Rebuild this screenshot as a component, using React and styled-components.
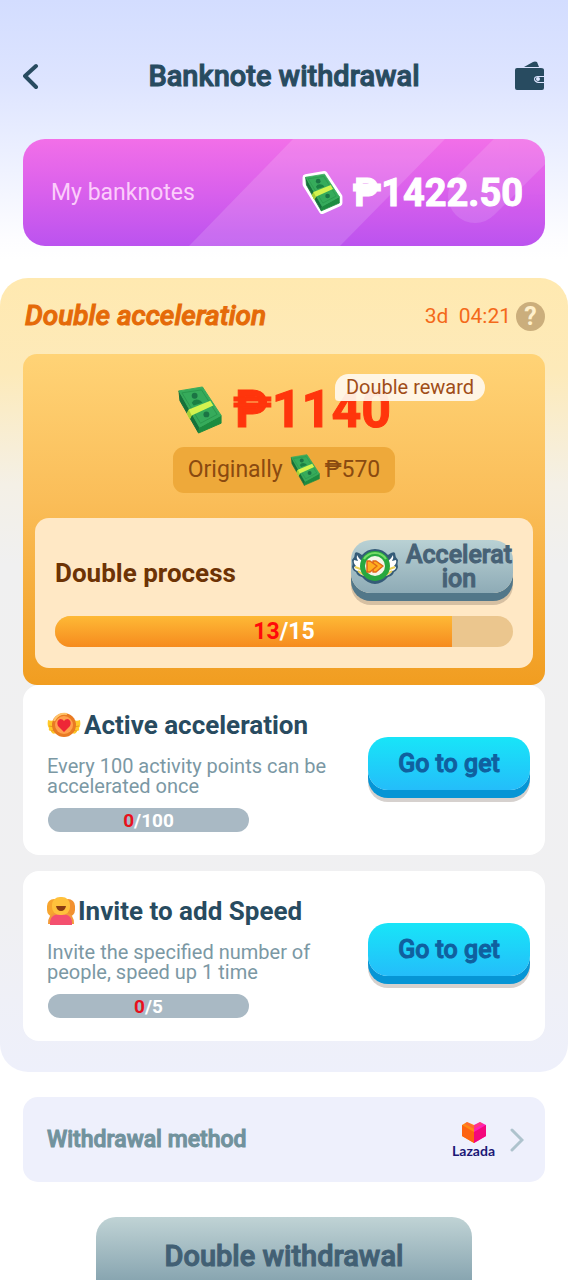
import * as React from "react"
import styled, { createGlobalStyle } from "styled-components"

const GlobalStyle = createGlobalStyle`
* {
  box-sizing: border-box;
}
body {
  margin: 0;
  font-family: Roboto, "Noto Sans", sans-serif;
  background: #fff;
}
h1, h2, h3, p {
  margin: 0;
}
button {
  font-family: inherit;
  border: 0;
  padding: 0;
  cursor: pointer;
}
svg {
  display: block;
  flex: none;
}
`

const Screen = styled.div`
height: 100vh;
overflow-y: auto;
scrollbar-width: none;
background: linear-gradient(180deg, #d3ddff 0px, #dde4ff 80px, #fdfdff 240px, #fff 260px);
`

const Header = styled.header`
display: flex;
align-items: center;
justify-content: space-between;
padding: 56px 23px 0;
height: 96px;
`

const Title = styled.h1`
font-size: 29px;
line-height: 40px;
font-weight: 500;
color: #284b60;
-webkit-text-stroke: 1px #284b60;
`

const IconButton = styled.button`
display: flex;
width: 30px;
background: none;
`

const Content = styled.div`
padding: 0 23px;
`

const BalanceCard = styled.section`
position: relative;
overflow: hidden;
display: flex;
align-items: center;
justify-content: space-between;
height: 107px;
margin: 43px 0 32px;
padding: 0 22px 0 28px;
border-radius: 22px;
background: linear-gradient(180deg, #f26fe8 0%, #d960ec 50%, #bb53ef 100%);
`

const Shine = styled.svg`
position: absolute;
inset: 0;
width: 100%;
height: 100%;
`

const BalanceLabel = styled.p`
position: relative;
font-size: 23px;
line-height: 28px;
color: #fccdfb;
`

const BalanceAmount = styled.p`
position: relative;
display: flex;
align-items: center;
gap: 9px;
font-size: 38px;
line-height: 48px;
font-weight: 700;
color: #fff;
-webkit-text-stroke: 1px #fff;
`

const Panel = styled.section`
padding: 0 23px 31px;
border-radius: 28px;
background: linear-gradient(180deg, #ffe9b0 0%, #fdeaba 12%, #f4f0e6 26%, #f0f0f0 36%, #f0f0f2 80%, #eef0fb 100%);
`

const PanelHead = styled.div`
display: flex;
align-items: center;
justify-content: space-between;
height: 76px;
padding-left: 2px;
`

const PanelTitle = styled.h2`
font-size: 28px;
line-height: 32px;
font-weight: 500;
font-style: italic;
color: #e56a08;
-webkit-text-stroke: 1px #e56a08;
`

const Timer = styled.div`
display: flex;
align-items: center;
gap: 5px;
font-size: 21px;
line-height: 28px;
color: #f4691a;
white-space: pre;
`

const Help = styled.button`
width: 29px;
height: 29px;
border-radius: 50%;
background: #cbae7c;
color: #fff0cb;
font-size: 25px;
line-height: 29px;
font-weight: 700;
`

const RewardCard = styled.div`
display: flex;
flex-direction: column;
align-items: center;
padding: 25px 12px 17px;
border-radius: 14px;
background: linear-gradient(180deg, #ffd376 0%, #fabd58 45%, #f19d20 100%);
`

const Reward = styled.div`
position: relative;
display: flex;
align-items: center;
gap: 8px;
height: 62px;
font-size: 52px;
line-height: 62px;
font-weight: 700;
color: #ff350c;
-webkit-text-stroke: 1px #ff350c;
`

const RewardTag = styled.span`
position: absolute;
left: 158px;
top: -5px;
padding: 0 11px;
border-radius: 14px 14px 14px 4px;
background: rgba(255, 248, 238, 0.92);
font-size: 20px;
line-height: 27px;
font-weight: 400;
white-space: nowrap;
color: #a04d18;
-webkit-text-stroke: 0;
`

const Original = styled.p`
display: flex;
align-items: center;
gap: 3px;
height: 46px;
margin-top: 6px;
padding: 0 15px;
border-radius: 11px;
background: #eea93a;
font-size: 23px;
line-height: 28px;
color: #8a4a10;
`

const OriginalLabel = styled.span`
margin-right: 4px;
`

const Process = styled.div`
align-self: stretch;
margin-top: 25px;
padding: 22px 20px 21px;
border-radius: 14px;
background: #ffe8c5;
`

const ProcessHead = styled.div`
display: flex;
align-items: center;
justify-content: space-between;
height: 66px;
margin-bottom: 10px;
`

const ProcessTitle = styled.h3`
font-size: 26px;
line-height: 30px;
font-weight: 700;
color: #6d3305;
`

const PushButton = styled.button`
display: flex;
align-items: center;
justify-content: center;
flex: none;
width: 162px;
height: 53px;
margin-bottom: 13px;
border-radius: 20px;
font-size: 25px;
line-height: 24px;
font-weight: 500;
color: ${props => props.$muted ? "#476276" : "#10609f"};
-webkit-text-stroke: 1px ${props => props.$muted ? "#476276" : "#10609f"};
background: ${props => props.$muted
    ? "linear-gradient(180deg, #b9d1d4, #8eabb6)"
    : "linear-gradient(180deg, #18e5f8, #24bdfa)"};
box-shadow: 0 8px 0 ${props => props.$muted ? "#527789" : "#0695d5"}, 0 12px 0 rgba(90, 70, 60, 0.25);
`

const BoostText = styled.span`
flex: 1;
margin-left: 6px;
word-break: break-all;
`

const Track = styled.div`
position: relative;
overflow: hidden;
display: flex;
align-items: center;
justify-content: center;
width: ${props => props.$small ? "201px" : "100%"};
height: ${props => props.$small ? "24px" : "31px"};
margin-left: ${props => props.$small ? "1px" : "0"};
border-radius: 16px;
background: ${props => props.$small ? "#a9b9c4" : "#ebc68e"};
font-size: ${props => props.$small ? "19px" : "23px"};
font-weight: 700;
color: #fff;
`

const Fill = styled.div`
position: absolute;
inset: 0 auto 0 0;
background: linear-gradient(180deg, #feb936, #f68b1e);
`

const Count = styled.span`
position: relative;
`

const Done = styled.span`
color: ${props => props.$small ? "#e8101c" : "#ff0a0a"};
`

const TaskCard = styled.article`
display: flex;
justify-content: space-between;
height: 170px;
margin-bottom: ${props => props.$last ? "0" : "16px"};
padding: 23px 15px 0 24px;
border-radius: 16px;
background: #fff;

${PushButton} {
  margin-top: 29px;
}
`

const TaskTitle = styled.h3`
display: flex;
align-items: center;
gap: 3px;
height: 34px;
margin-bottom: 14px;
font-size: 26px;
font-weight: 700;
white-space: nowrap;
color: #284b60;
`

const TaskText = styled.p`
width: 290px;
height: 40px;
margin-bottom: 12px;
font-size: 20px;
line-height: 20px;
color: #7b98a4;
`

const Method = styled.button`
display: flex;
align-items: center;
width: 100%;
height: 85px;
margin: 25px 0 35px;
padding: 0 21px 0 24px;
border-radius: 15px;
background: #eef0fc;
`

const MethodLabel = styled.span`
flex: 1;
text-align: left;
font-size: 23px;
font-weight: 500;
color: #71929d;
-webkit-text-stroke: 1px #71929d;
`

const Brand = styled.span`
display: flex;
flex-direction: column;
align-items: center;
margin-right: 15px;
font-family: Lato, sans-serif;
font-size: 14px;
line-height: 14px;
font-weight: 700;
color: #1b1876;
`

const Withdraw = styled.button`
display: block;
width: 72%;
height: 90px;
margin: 0 auto;
padding-bottom: 12px;
border-radius: 20px;
background: linear-gradient(180deg, #c0d3d5 0px, #84a2ae 68px);
box-shadow: 0 8px 0 #527789;
font-size: 29px;
font-weight: 500;
color: #426074;
-webkit-text-stroke: 1px #426074;
`

const Bill = ({ size, outlined }) => (
    <svg width={size} height={size} viewBox={outlined ? "-4 -3 55 55" : "0 0 49 49"} aria-hidden="true">
        {outlined && (
            <path d="M2 5 26 1 45 30V38L23 48 2 14Z" fill="#fff" stroke="#fff" strokeWidth="8" strokeLinejoin="round" />
        )}
        <path d="M2 5 23 41 22 48 3 15Z" fill="#16713a" stroke="#16713a" strokeLinejoin="round" />
        <path d="M23 42 45 30V38L22 48Z" fill="#1d8c40" stroke="#1d8c40" strokeLinejoin="round" />
        <path d="M2 5 26 1 45 30 23 42Z" fill="#36ab5b" stroke="#36ab5b" strokeLinejoin="round" />
        <path d="M5 7 25 4 41 29 24 38Z" fill="none" stroke="#2a984d" />
        <circle cx="18" cy="10" r="3" fill="#1b7444" />
        <path d="M15 17Q18 12 24 15L26 17 17 20Z" fill="#1b7f43" />
        <circle cx="30" cy="29" r="3" fill="#1b7444" />
        <path d="M12 24 34 15 37 20 15 30 13 34 10 28Z" fill="#d3f34f" />
        <path d="M12 24 15 30 13 34 10 28Z" fill="#a6cf33" />
    </svg>
)

const BackIcon = () => (
    <svg width="18" height="28" viewBox="0 0 18 28" fill="none" stroke="#284b60" strokeWidth="4" strokeLinecap="round" strokeLinejoin="round" aria-hidden="true">
        <path d="M13 4 2 14 13 25" />
    </svg>
)

const WalletIcon = () => (
    <svg width="30" height="30" viewBox="0 0 30 30" fill="#284b60" aria-hidden="true">
        <path d="M9 6 18 1Q20 0 22 1L24 6Z" />
        <path d="M2 7H26Q29 7 29 9V15H23Q19 15 19 18T23 22H29V27Q29 29 27 29H2Q0 29 0 27V9Q0 7 2 7Z" />
        <path d="M29 16H24Q20 16 20 18T24 21H29Z" />
        <circle cx="23" cy="18" r="2" fill="#dfe6ff" />
    </svg>
)

const BoostIcon = () => (
    <svg width="48" height="38" viewBox="0 0 48 38" aria-hidden="true">
        <path d="M24 1Q32 1 37 7 42 3 44 5 44 9 47 12 46 16 47 19 46 23 43 24 42 28 37 29 31 36 24 36T11 29Q6 28 5 24 2 23 1 19 2 16 1 12 4 9 4 5 6 3 11 7 16 1 24 1Z" fill="#355c78" />
        <path d="M6 7Q9 13 14 14V28Q8 27 7 23 3 22 3 19L5 18Q2 15 3 12L7 13Q5 10 6 7Z" fill="#fff" />
        <path d="M42 7Q39 13 34 14V28Q40 27 41 23 45 22 45 19L43 18Q46 15 45 12L41 13Q43 10 42 7Z" fill="#fff" />
        <path d="M4 19 12 22M7 23 13 27M44 19 36 22M41 23 35 27" stroke="#ead156" strokeWidth="2" />
        <circle cx="24" cy="18" r="15" fill="#27a83f" />
        <path d="M13 11A13 13 0 0 1 35 11" stroke="#75db68" strokeWidth="2" fill="none" />
        <circle cx="24" cy="18" r="10" fill="#f4f5ea" />
        <g fill="#ffae1e" stroke="#df6819" strokeWidth="1.5" strokeLinejoin="round">
            <path d="M22 13H25L32 18 25 24H22Z" />
            <path d="M16 13H19L26 18 19 24H16Z" />
        </g>
    </svg>
)

const HeartBadge = () => (
    <svg width="34" height="26" viewBox="0 0 34 26" aria-hidden="true">
        <path d="M1 8Q5 10 9 7V21Q5 23 4 19 1 19 2 16 0 14 1 8Z" fill="#ffc928" />
        <path d="M33 8Q29 10 25 7V21Q29 23 30 19 33 19 32 16 34 14 33 8Z" fill="#ffc928" />
        <path d="M2 14Q5 15 8 14M4 19Q6 19 8 18M32 14Q29 15 26 14M30 19Q28 19 26 18" stroke="#e89a1c" fill="none" />
        <circle cx="17" cy="13" r="12" fill="#e97a22" />
        <circle cx="17" cy="13" r="9" fill="#ff9f4c" />
        <path d="M7 9A11 11 0 0 1 20 2" stroke="#ffc46a" strokeWidth="2" fill="none" />
        <path d="M17 20 11 14Q9 9 13 7 16 7 17 9 18 7 21 7 25 9 23 14Z" fill="#ee2636" />
    </svg>
)

const FriendIcon = () => (
    <svg width="28" height="30" viewBox="0 0 28 30" aria-hidden="true">
        <rect x="0" y="3" width="14" height="18" rx="7" fill="#f7a52f" />
        <rect x="14" y="3" width="14" height="18" rx="7" fill="#f29130" />
        <path d="M1 28Q1 18 8 17H20Q27 18 27 28Z" fill="#f39a3a" />
        <path d="M3 29Q2 18 14 18T25 29Z" fill="#f4506f" />
        <rect x="5" y="1" width="18" height="18" rx="8" fill="#ffc13c" />
        <path d="M9 10H19Q18 15 14 15T9 10Z" fill="#8a3b12" />
    </svg>
)

const BrandHeart = () => (
    <svg width="24" height="23" viewBox="0 0 24 23" aria-hidden="true">
        <path d="M0 4 5 1 12 4V22L0 15Z" fill="#ff8a14" />
        <path d="M24 4 18 1 12 4V22L24 15Z" fill="#ff22b4" />
        <path d="M0 4 12 11V22L0 15Z" fill="#fd6312" />
        <path d="M24 4 12 11V22L24 15Z" fill="#f4087c" />
        <path d="M5 1 12 5 18 1 21 3 12 8 3 3Z" fill="#ff4b4b" opacity="0.5" />
    </svg>
)

const NextIcon = () => (
    <svg width="14" height="24" viewBox="0 0 14 24" fill="none" stroke="#aec3cd" strokeWidth="3" strokeLinecap="round" aria-hidden="true">
        <path d="M2 2 12 12 2 22" />
    </svg>
)

const Progress = ({ done, total, small }) => (
    <Track $small={small} role="progressbar" aria-valuenow={done} aria-valuemax={total}>
        <Fill style={{ width: `${done / total * 100}%` }} />
        <Count><Done $small={small}>{done}</Done>/{total}</Count>
    </Track>
)

const tasks = [
    { title: "Active acceleration", text: "Every 100 activity points can be accelerated once", total: 100, icon: <HeartBadge /> },
    { title: "Invite to add Speed", text: "Invite the specified number of people, speed up 1 time", total: 5, icon: <FriendIcon /> },
]

const App = () => (
    <Screen>
        <GlobalStyle />
        <Header>
            <IconButton aria-label="Back"><BackIcon /></IconButton>
            <Title>Banknote withdrawal</Title>
            <IconButton aria-label="Wallet"><WalletIcon /></IconButton>
        </Header>
        <Content>
            <BalanceCard>
                <Shine viewBox="0 0 522 107" preserveAspectRatio="none" aria-hidden="true">
                    <path d="M270 0H422L317 107H166Z" fill="#fff" opacity="0.14" />
                    <path d="M452 57 540 -31" stroke="#fff" strokeWidth="54" strokeLinecap="round" opacity="0.12" />
                </Shine>
                <BalanceLabel>My banknotes</BalanceLabel>
                <BalanceAmount><Bill size={43} outlined />₱1422.50</BalanceAmount>
            </BalanceCard>
        </Content>
        <Panel>
            <PanelHead>
                <PanelTitle>Double acceleration</PanelTitle>
                <Timer>{"3d  04:21"}<Help aria-label="Help">?</Help></Timer>
            </PanelHead>
            <RewardCard>
                <Reward>
                    <Bill size={48} />
                    ₱1140
                    <RewardTag>Double reward</RewardTag>
                </Reward>
                <Original><OriginalLabel>Originally</OriginalLabel><Bill size={32} />₱570</Original>
                <Process>
                    <ProcessHead>
                        <ProcessTitle>Double process</ProcessTitle>
                        <PushButton $muted><BoostIcon /><BoostText>Acceleration</BoostText></PushButton>
                    </ProcessHead>
                    <Progress done={13} total={15} />
                </Process>
            </RewardCard>
            {tasks.map((task, i) => (
                <TaskCard key={task.title} $last={i === tasks.length - 1}>
                    <div>
                        <TaskTitle>{task.icon}{task.title}</TaskTitle>
                        <TaskText>{task.text}</TaskText>
                        <Progress small done={0} total={task.total} />
                    </div>
                    <PushButton>Go to get</PushButton>
                </TaskCard>
            ))}
        </Panel>
        <Content>
            <Method>
                <MethodLabel>Withdrawal method</MethodLabel>
                <Brand><BrandHeart />Lazada</Brand>
                <NextIcon />
            </Method>
            <Withdraw>Double withdrawal</Withdraw>
        </Content>
    </Screen>
)

export default App
